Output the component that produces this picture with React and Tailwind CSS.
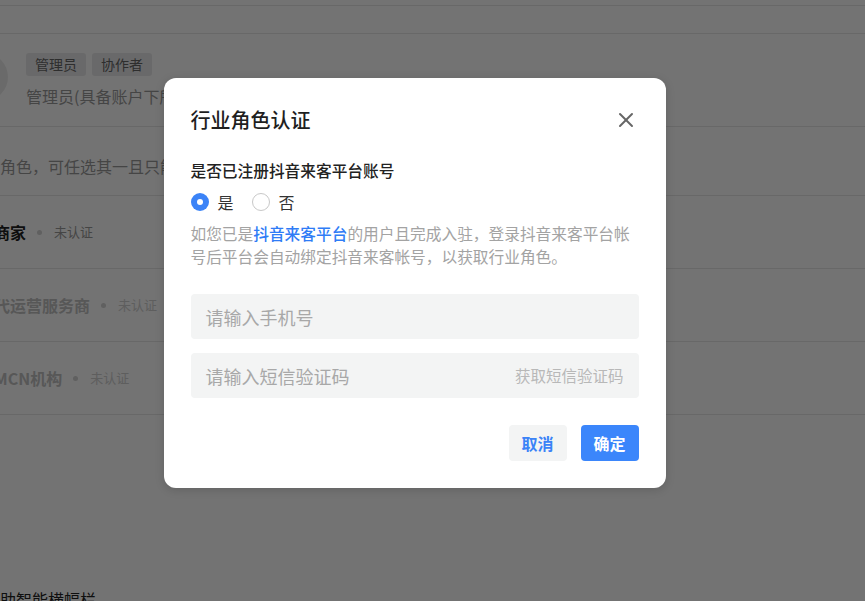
import { X } from 'lucide-react';

const roles = [
  { name: '商家', nameClass: 'font-semibold text-[#1f1f1f]', tagClass: 'text-[#999]' },
  { name: '代运营服务商', nameClass: 'font-semibold text-[#c2c2c2]', tagClass: 'text-[#d0d0d0]' },
  { name: 'MCN机构', nameClass: 'font-semibold text-[#c2c2c2]', tagClass: 'text-[#d0d0d0]' },
];

const RoleRow = ({ role }) => (
  <div className="h-[73px] border-b border-[#e6e6e6] flex items-center -ml-[6px]">
    <span className={`text-base leading-6 ${role.nameClass}`}>{role.name}</span>
    <span className="w-[5px] h-[5px] rounded-full bg-[#d4d4d4] ml-[11px]" />
    <span className={`text-[13px] ml-[12px] ${role.tagClass}`}>未认证</span>
  </div>
);

const Radio = ({ checked, label }) => (
  <label className="flex items-center gap-[9px] text-base leading-6 text-[#333]">
    {checked ? (
      <span className="w-[18px] h-[18px] rounded-full bg-[#3b83f7] flex items-center justify-center">
        <span className="w-[6px] h-[6px] rounded-full bg-white" />
      </span>
    ) : (
      <span className="w-[18px] h-[18px] rounded-full border border-[#c8c8c8] bg-white" />
    )}
    {label}
  </label>
);

const App = () => {
  return (
    <div className="relative w-[865px] h-[601px] overflow-hidden bg-white font-['Noto_Sans_CJK_SC','Noto_Sans',sans-serif]">
      {/* page beneath the mask */}
      <div className="flex flex-col">
        <div className="h-[6px] border-b border-[#e6e6e6]" />
        <div className="h-[28px] border-b border-[#e6e6e6]" />
        <div className="h-[93px] border-b border-[#e6e6e6] flex pt-[19px]">
          <div className="w-12 h-12 rounded-full bg-[#ececec] -ml-[40px] shrink-0" />
          <div className="ml-[18px] flex flex-col">
            <div className="flex gap-[6px]">
              <span className="h-[23px] px-[9px] rounded-[3px] bg-[#e9e9eb] text-sm leading-[23px] text-[#666]">管理员</span>
              <span className="h-[23px] px-[9px] rounded-[3px] bg-[#e9e9eb] text-sm leading-[23px] text-[#666]">协作者</span>
            </div>
            <p className="mt-2 text-base leading-6 text-[#9a9a9a] whitespace-nowrap">管理员(具备账户下所有权限)</p>
          </div>
        </div>
        <div className="h-[69px] border-b border-[#e6e6e6] pt-[27px]">
          <p className="-ml-[32px] text-base leading-6 text-[#9a9a9a] whitespace-nowrap">行业角色，可任选其一且只能认证一个</p>
        </div>
        {roles.map((r) => (
          <RoleRow key={r.name} role={r} />
        ))}
        <p className="mt-[172px] -ml-[16px] text-base leading-6 text-[#222] whitespace-nowrap">辅助智能横幅栏</p>
      </div>

      {/* mask + dialog */}
      <div className="absolute inset-0 bg-black/55 flex justify-center pt-[78px] pr-[36px]">
        <div className="w-[502px] h-[410px] bg-white rounded-xl px-[27px] pt-[28px] pb-[27px] flex flex-col shadow-[0_2px_10px_rgba(0,0,0,0.15)]">
          <div className="flex items-center justify-between h-7">
            <h2 className="text-xl leading-7 text-[#1f1f1f] font-medium">行业角色认证</h2>
            <button className="mr-[1px] text-[#666]">
              <X className="w-6 h-6" strokeWidth={2} />
            </button>
          </div>

          <p className="mt-[25px] text-[15.7px] leading-6 font-medium text-[#222]">是否已注册抖音来客平台账号</p>
          <div className="mt-[7px] flex items-center gap-[18px]">
            <Radio checked label="是" />
            <Radio label="否" />
          </div>
          <p className="mt-[8px] text-[15.7px] leading-[23px] text-[#a3a3a3]">
            如您已是<span className="text-[#2f7cf6] font-medium">抖音来客平台</span>的用户且完成入驻，登录抖音来客平台帐号后平台会自动绑定抖音来客帐号，以获取行业角色。
          </p>

          <div className="mt-[26px] h-[45px] rounded bg-[#f3f4f4] flex items-center px-[15px]">
            <span className="text-lg text-[#a8a8a8]">请输入手机号</span>
          </div>
          <div className="mt-[14px] h-[45px] rounded bg-[#f3f4f4] flex items-center justify-between px-[15px]">
            <span className="text-lg text-[#a8a8a8]">请输入短信验证码</span>
            <span className="text-[15.5px] text-[#b8b8b8]">获取短信验证码</span>
          </div>

          <div className="mt-auto flex justify-end gap-[14px]">
            <button className="w-[58px] h-9 rounded bg-[#f3f4f4] text-base font-semibold text-[#3b83f7]">取消</button>
            <button className="w-[58px] h-9 rounded bg-[#3b86fb] text-base font-semibold text-white">确定</button>
          </div>
        </div>
      </div>
    </div>
  );
};

export default App;
